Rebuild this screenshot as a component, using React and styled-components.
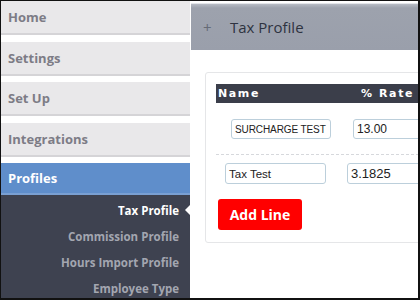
import React from "react";
import styled, { createGlobalStyle } from "styled-components";

const Global = createGlobalStyle`
  html, body { margin: 0; padding: 0; background: #fff; }
  * { box-sizing: border-box; }
`;

const Frame = styled.div`
  width: 420px;
  height: 300px;
  border-top: 1px solid #111;
  border-left: 1px solid #111;
  border-right: 2px solid #111;
  border-bottom: 2px solid #111;
  display: flex;
  overflow: hidden;
  background: #fff;
  font-family: "Open Sans", "Liberation Sans", sans-serif;
`;

const Sidebar = styled.nav`
  width: 189px;
  flex: none;
  display: flex;
  flex-direction: column;
  gap: 6.5px;
`;

const NavItem = styled.div`
  height: ${(p) => (p.$active ? 32 : 34)}px;
  flex: none;
  display: flex;
  align-items: center;
  padding-left: 7px;
  font-size: 13px;
  font-weight: 700;
  color: ${(p) => (p.$active ? "#fff" : "#7d7c86")};
  background: ${(p) => (p.$active ? "#5f8ecb" : "#e9e8ea")};
  border-bottom: 2px solid ${(p) => (p.$active ? "#7aa0d3" : "#d5d4d7")};
`;

const Group = styled.div`
  display: flex;
  flex-direction: column;
  flex: 1;
`;

const SubMenu = styled.div`
  flex: 1;
  background: #3e4250;
  padding-top: 2px;
  display: flex;
  flex-direction: column;
`;

const SubItem = styled.div`
  position: relative;
  height: 26px;
  display: flex;
  align-items: center;
  justify-content: flex-end;
  padding-right: 11px;
  font-size: 11.5px;
  font-weight: 700;
  white-space: nowrap;
  color: ${(p) => (p.$active ? "#ffffff" : "#a3a6b0")};
`;

const Caret = styled.span`
  position: absolute;
  right: 0;
  top: 50%;
  margin-top: -5px;
  width: 0;
  height: 0;
  border-top: 5px solid transparent;
  border-bottom: 5px solid transparent;
  border-right: 5px solid #fff;
`;

const Main = styled.main`
  flex: 1;
  min-width: 0;
  padding-top: 3px;
  display: flex;
  flex-direction: column;
  overflow: hidden;
  background: linear-gradient(#fff 0, #fff 2px, #e4e6ea 2px, #e4e6ea 3px, #fff 3px);
  background-repeat: no-repeat;
  background-size: 100% 3px;
  margin-left: 1px;
`;

const Header = styled.div`
  height: 46px;
  flex: none;
  display: flex;
  align-items: center;
  background: linear-gradient(#b7bbc4 0, #9da2ad 4px, #9a9fab 100%);
  padding-left: 12px;
`;

const Plus = styled.span`
  color: #666b76;
  font-size: 15px;
  width: 27px;
  line-height: 1;
`;

const HeaderTitle = styled.span`
  color: #2e3340;
  font-size: 15px;
`;

const Card = styled.div`
  margin: 22px 0 0 14px;
  width: 320px;
  border: 1px solid #e5e6e8;
  border-radius: 3px;
  padding: 11px 0 12px 10px;
`;

const TableHead = styled.div`
  height: 19px;
  background: #3b3e4a;
  display: flex;
  align-items: center;
  color: #fff;
  font-family: "DejaVu Sans", Verdana, sans-serif;
  font-size: 11px;
  font-weight: 700;
  letter-spacing: 1.6px;
`;

const HeadCell = styled.span`
  width: ${(p) => p.$w}px;
  padding-left: 2px;
`;

const Row = styled.div`
  display: flex;
  gap: ${(p) => p.$gap}px;
  padding-left: ${(p) => p.$indent}px;
  margin-top: ${(p) => p.$top}px;
`;

const Input = styled.div`
  width: ${(p) => p.$w}px;
  height: ${(p) => p.$h}px;
  flex: none;
  border: 1px solid #bccfdb;
  border-radius: 3px;
  display: flex;
  align-items: center;
  padding-left: 3px;
  white-space: nowrap;
  overflow: hidden;
  font-family: "Liberation Sans", Arial, sans-serif;
  font-size: ${(p) => p.$fs}px;
  letter-spacing: ${(p) => p.$ls || 0}px;
  color: #222;
  background: #fff;
`;

const Divider = styled.div`
  margin-top: 15px;
  border-top: 1px dashed #d6d8dc;
`;

const AddButton = styled.button`
  margin-top: 15px;
  margin-left: 2px;
  width: 84px;
  height: 31px;
  border: none;
  border-radius: 3px;
  background: #ff0000;
  color: #fff;
  font-family: "Open Sans", "Liberation Sans", sans-serif;
  font-size: 14px;
  font-weight: 700;
  display: block;
  padding: 0;
`;

export default function App() {
  return (
    <>
      <Global />
      <Frame>
        <Sidebar>
          <NavItem>Home</NavItem>
          <NavItem>Settings</NavItem>
          <NavItem>Set Up</NavItem>
          <NavItem>Integrations</NavItem>
          <Group>
            <NavItem $active>Profiles</NavItem>
            <SubMenu>
              <SubItem $active>
                Tax Profile
                <Caret />
              </SubItem>
              <SubItem>Commission Profile</SubItem>
              <SubItem>Hours Import Profile</SubItem>
              <SubItem>Employee Type</SubItem>
            </SubMenu>
          </Group>
        </Sidebar>
        <Main>
          <Header>
            <Plus>+</Plus>
            <HeaderTitle>Tax Profile</HeaderTitle>
          </Header>
          <Card>
            <TableHead>
              <HeadCell $w={143}>Name</HeadCell>
              <HeadCell $w={120}>% Rate</HeadCell>
            </TableHead>
            <Row $indent={15} $gap={22} $top={16}>
              <Input $w={100} $h={20} $fs={10} $ls={-0.1}>SURCHARGE TEST</Input>
              <Input $w={120} $h={20} $fs={12}>13.00</Input>
            </Row>
            <Divider />
            <Row $indent={9} $gap={21} $top={8}>
              <Input $w={101} $h={21} $fs={11.5}>Tax Test</Input>
              <Input $w={120} $h={21} $fs={13}>3.1825</Input>
            </Row>
            <AddButton>Add Line</AddButton>
          </Card>
        </Main>
      </Frame>
    </>
  );
}
